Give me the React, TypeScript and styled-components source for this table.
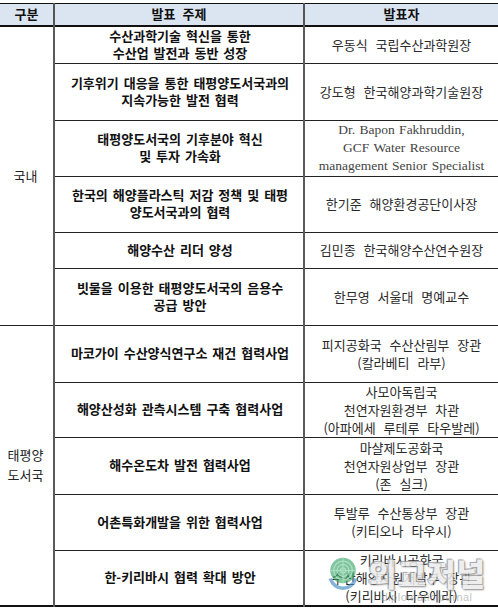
import styled, { createGlobalStyle } from "styled-components";

const GlobalStyle = createGlobalStyle`
  body {
    margin: 0;
    background: #fff;
    font-family: "Noto Sans CJK KR", "Noto Sans", sans-serif;
  }
`;

type Row = { topic: string[]; speaker: string[]; h: number; latin?: boolean };

const domestic: Row[] = [
  { topic: ["수산과학기술 혁신을 통한", "수산업 발전과 동반 성장"], speaker: ["우동식 국립수산과학원장"], h: 37 },
  { topic: ["기후위기 대응을 통한 태평양도서국과의", "지속가능한 발전 협력"], speaker: ["강도형 한국해양과학기술원장"], h: 57 },
  {
    topic: ["태평양도서국의 기후분야 혁신", "및 투자 가속화"],
    speaker: ["Dr. Bapon Fakhruddin,", "GCF Water Resource", "management Senior Specialist"],
    h: 56,
    latin: true,
  },
  { topic: ["한국의 해양플라스틱 저감 정책 및 태평", "양도서국과의 협력"], speaker: ["한기준 해양환경공단이사장"], h: 56 },
  { topic: ["해양수산 리더 양성"], speaker: ["김민종 한국해양수산연수원장"], h: 36 },
  { topic: ["빗물을 이용한 태평양도서국의 음용수", "공급 방안"], speaker: ["한무영 서울대 명예교수"], h: 57 },
];

const pacific: Row[] = [
  { topic: ["마코가이 수산양식연구소 재건 협력사업"], speaker: ["피지공화국 수산산림부 장관", "(칼라베티 라부)"], h: 57 },
  { topic: ["해양산성화 관측시스템 구축 협력사업"], speaker: ["사모아독립국", "천연자원환경부 차관", "(아파에세 루테루 타우발레)"], h: 55 },
  { topic: ["해수온도차 발전 협력사업"], speaker: ["마샬제도공화국", "천연자원상업부 장관", "(존 실크)"], h: 57 },
  { topic: ["어촌특화개발을 위한 협력사업"], speaker: ["투발루 수산통상부 장관", "(키티오나 타우시)"], h: 56 },
  { topic: ["한-키리바시 협력 확대 방안"], speaker: ["키리바시공화국", "수산해양자원개발부 장관", "(키리바시 타우에라)"], h: 56 },
];

export default function App() {
  const renderGroup = (label: string[], rows: Row[], last: boolean) =>
    rows.map((r, i) => (
      <BodyRow key={r.topic[0]} $h={r.h} $groupEnd={i === rows.length - 1} $last={last}>
        {i === 0 && (
          <GroupCell rowSpan={rows.length}>
            {label.map((l) => (
              <div key={l}>{l}</div>
            ))}
          </GroupCell>
        )}
        <TopicCell>
          {r.topic.map((t) => (
            <div key={t}>{t}</div>
          ))}
        </TopicCell>
        <SpeakerCell $latin={r.latin}>
          {r.speaker.map((s) => (
            <div key={s}>{s}</div>
          ))}
        </SpeakerCell>
      </BodyRow>
    ));

  return (
    <>
      <GlobalStyle />
      <Page>
        <Table>
          <colgroup>
            <col style={{ width: 54 }} />
            <col style={{ width: 250 }} />
            <col />
          </colgroup>
          <thead>
            <HeadRow>
              <HeadCell>구분</HeadCell>
              <HeadCell>발표 주제</HeadCell>
              <HeadCell>발표자</HeadCell>
            </HeadRow>
          </thead>
          <tbody>
            {renderGroup(["국내"], domestic, false)}
            {renderGroup(["태평양", "도서국"], pacific, true)}
          </tbody>
        </Table>
        <Watermark>
          <Globe viewBox="0 0 40 42" width="34" height="36">
            <path d="M3 28 Q8 41 20 41 Q32 41 37 28 L33 27 Q29 37 20 37 Q11 37 7 27 Z" fill="#4a90c8" opacity="0.8" />
            <circle cx="20" cy="18" r="15" fill="#3aa56a" opacity="0.75" />
            <circle cx="20" cy="18" r="11" fill="none" stroke="#a8e0bc" strokeWidth="1.2" />
            <circle cx="20" cy="18" r="7" fill="none" stroke="#a8e0bc" strokeWidth="1.2" />
            <circle cx="20" cy="18" r="3" fill="none" stroke="#a8e0bc" strokeWidth="1.2" />
            <line x1="5" y1="18" x2="35" y2="18" stroke="#a8e0bc" strokeWidth="1" />
            <line x1="20" y1="3" x2="20" y2="33" stroke="#a8e0bc" strokeWidth="1" />
          </Globe>
          <MarkText>
            <MarkTitle>외교저널</MarkTitle>
            <MarkSub>diplomaticjournal</MarkSub>
          </MarkText>
        </Watermark>
      </Page>
    </>
  );
}

const Page = styled.div`
  position: relative;
  padding-top: 3px;
  width: 498px;
`;

const Table = styled.table`
  width: 498px;
  border-collapse: collapse;
  table-layout: fixed;
  border-top: 1px solid #111;
`;

const HeadRow = styled.tr`
  height: 22px;
  background: #dbe5f1;
  border-bottom: 2px solid #111;
`;

const HeadCell = styled.th`
  padding: 0;
  font-size: 13px;
  font-weight: 700;
  line-height: 16px;
  color: #111;
  text-align: center;
  word-spacing: 4px;
  & + & {
    border-left: 2px solid #555;
  }
`;

const BodyRow = styled.tr<{ $h: number; $groupEnd: boolean; $last: boolean }>`
  height: ${(p) => p.$h}px;
  border-bottom: ${(p) => (p.$last && p.$groupEnd ? "2px solid #111" : "1px solid #222")};
`;

const GroupCell = styled.td`
  padding: 0 2px 0 0;
  text-align: center;
  vertical-align: middle;
  font-size: 13px;
  line-height: 20px;
  color: #222;
`;

const TopicCell = styled.td`
  padding: 0 0 2px 2px;
  text-align: center;
  vertical-align: middle;
  font-size: 13px;
  font-weight: 700;
  line-height: 17px;
  color: #111;
  white-space: nowrap;
  word-spacing: 2px;
  border-left: 2px solid #5a5a5a;
`;

const SpeakerCell = styled.td<{ $latin?: boolean }>`
  padding: 0;
  text-align: center;
  vertical-align: middle;
  white-space: nowrap;
  border-left: 2px solid #5a5a5a;
  color: ${(p) => (p.$latin ? "#444" : "#2a2a2a")};
  font-family: ${(p) =>
    p.$latin ? '"Liberation Serif", "Noto Sans CJK KR", serif' : '"Noto Sans CJK KR", sans-serif'};
  font-size: ${(p) => (p.$latin ? "13.5px" : "13px")};
  line-height: 18px;
  word-spacing: ${(p) => (p.$latin ? "1px" : "5px")};
`;

const Watermark = styled.div`
  position: absolute;
  left: 326px;
  top: 555px;
  display: flex;
  align-items: flex-start;
  gap: 8px;
  opacity: 0.85;
  pointer-events: none;
`;

const Globe = styled.svg`
  display: block;
`;

const MarkText = styled.div`
  display: flex;
  flex-direction: column;
  align-items: center;
`;

const MarkTitle = styled.div`
  font-family: "Noto Sans CJK KR", sans-serif;
  font-weight: 900;
  font-size: 31px;
  line-height: 36px;
  letter-spacing: 1px;
  color: rgba(255, 255, 255, 0.85);
  text-shadow: 0 0 1px #888, 1px 1px 2px #777, -1px -1px 1px #999;
`;

const MarkSub = styled.div`
  font-family: "Liberation Sans", sans-serif;
  font-size: 11px;
  line-height: 12px;
  letter-spacing: 0.5px;
  color: rgba(150, 150, 150, 0.7);
`;
